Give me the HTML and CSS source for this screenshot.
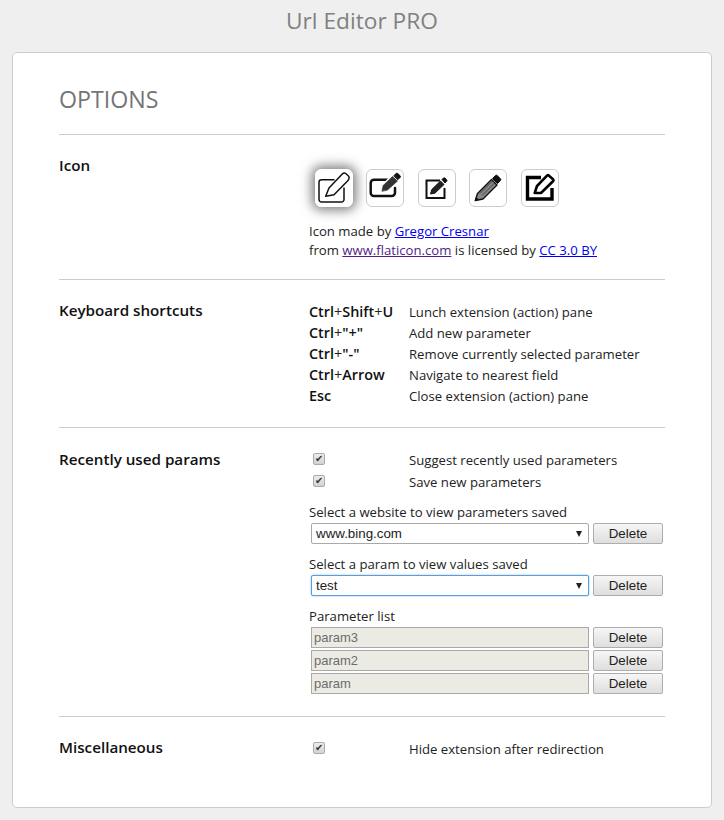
FILE: index.html
```html
<!DOCTYPE html>
<html lang="en">
<head>
    <meta charset="UTF-8">
    <title>Url Editor PRO</title>
    <link rel="stylesheet" href="styles.css">
</head>
<body>
    <h1 class="app-title">Url Editor PRO</h1>
    <div class="card">
        <h2 class="card-title">OPTIONS</h2>

        <section class="row row-icon">
            <h3 class="row-label">Icon</h3>
            <div class="row-body">
                <div class="icons">
                    <button class="icon-btn selected" type="button">
                        <svg width="34" height="34" viewBox="0 0 34 34" fill="none" stroke="#111" stroke-width="1.5" stroke-linejoin="round" stroke-linecap="round">
                            <path d="M17 8.700H4.500a2.500 2.500 0 0 0-2.500 2.500V28.500a2.500 2.500 0 0 0 2.500 2.500H24.500a2.500 2.500 0 0 0 2.500-2.500V17"/>
                            <path d="M8.700 25.300L12 17 25.300 3c1-1 2.400-1.300 3.400-.5L31.500 5c1 1 .8 3.500-1.200 5.300L17 23.700z"/>
                        </svg>
                    </button>
                    <button class="icon-btn" type="button">
                        <svg width="34" height="34" viewBox="0 0 34 34" fill="none" stroke="#111" stroke-width="2.500" stroke-linejoin="round" stroke-linecap="round">
                            <path d="M20 8.700H6a3.300 3.300 0 0 0-3.300 3.300v9.700A3.300 3.300 0 0 0 6 25h17.700a3.300 3.300 0 0 0 3.300-3.300V17"/>
                            <path d="M13.500 20.500l1-6.500L24 4.500l6 5.500-10 10z" fill="#fff" stroke="#fff" stroke-width="1.500"/>
                            <path d="M14 20l1.200-5.500L24.500 5.500l5 4.500L19.500 19z" fill="#333" stroke="#222" stroke-width=".6"/>
                            <path d="M26 4.500l2.200-2c.5-.4 1-.4 1.500 0l2.500 2.300c.4.500.4 1 0 1.500L30 8.500z" fill="#111" stroke-width="1"/>
                        </svg>
                    </button>
                    <button class="icon-btn" type="button">
                        <svg width="34" height="34" viewBox="0 0 34 34" fill="none" stroke="#111" stroke-width="2" stroke-linejoin="miter">
                            <path d="M20 9.500H6.500V27h18V17"/>
                            <path d="M10.500 23l1.300-4.500L20.500 10l3.500 3.500-9 8.600z" fill="#222" stroke-width="1" stroke-linejoin="round"/>
                            <path d="M22 8.500l1.500-1.500c.5-.4 1-.4 1.400 0l1.800 1.800c.4.400.4.900 0 1.300L25 12z" fill="#111" stroke-width="1" stroke-linejoin="round"/>
                        </svg>
                    </button>
                    <button class="icon-btn" type="button">
                        <svg width="34" height="34" viewBox="0 0 34 34" fill="none" stroke="#111" stroke-linejoin="round">
                            <path d="M4.300 29.500l2.200-7L20.500 8.500l5.500 5.500-14 14z" fill="#888" stroke-width="1.400"/>
                            <path d="M9 22.500L22 9.500M11 24.500L24 11.500" stroke="#333" stroke-width=".8"/>
                            <path d="M21.500 7.500l3-3c.5-.5 1.200-.5 1.700 0l3.300 3.300c.5.500.5 1.200 0 1.700l-3 3z" fill="#111" stroke-width="1"/>
                            <path d="M4.300 29.500l.9-3 2.200 2.200z" fill="#111" stroke-width="1"/>
                        </svg>
                    </button>
                    <button class="icon-btn" type="button">
                        <svg width="34" height="34" viewBox="0 0 34 34" fill="none" stroke="#000" stroke-linejoin="miter">
                            <path d="M18 6.500H4.500v21.500h24.500V17" stroke-width="3.400"/>
                            <path d="M11.700 22L14 15 24 4.700c.6-.6 1.400-.6 2 0l4 3.500c.7.600.7 1.400 0 2L18 22z" stroke-width="2.600" stroke-linejoin="round"/>
                        </svg>
                    </button>
                </div>
                <p class="credit">Icon made by <a href="#a">Gregor Cresnar</a><br>from <a class="visited" href="#b">www.flaticon.com</a> is licensed by <a href="#c">CC 3.0 BY</a></p>
            </div>
        </section>

        <section class="row row-keys">
            <h3 class="row-label">Keyboard shortcuts</h3>
            <div class="row-body shortcuts">
                <div class="shortcut"><span class="keys"><b>Ctrl</b>+<b>Shift</b>+<b>U</b></span><span>Lunch extension (action) pane</span></div>
                <div class="shortcut"><span class="keys"><b>Ctrl</b>+<b>"+"</b></span><span>Add new parameter</span></div>
                <div class="shortcut"><span class="keys"><b>Ctrl</b>+<b>"-"</b></span><span>Remove currently selected parameter</span></div>
                <div class="shortcut"><span class="keys"><b>Ctrl</b>+<b>Arrow</b></span><span>Navigate to nearest field</span></div>
                <div class="shortcut"><span class="keys"><b>Esc</b></span><span>Close extension (action) pane</span></div>
            </div>
        </section>

        <section class="row row-params">
            <h3 class="row-label">Recently used params</h3>
            <div class="row-body">
                <label class="check"><span class="check-box"><input type="checkbox" checked></span><span>Suggest recently used parameters</span></label>
                <label class="check"><span class="check-box"><input type="checkbox" checked></span><span>Save new parameters</span></label>

                <div class="field field-first">
                    <div class="field-label">Select a website to view parameters saved</div>
                    <div class="control">
                        <div class="select-wrap"><select class="select"><option>www.bing.com</option></select></div>
                        <button class="delete" type="button">Delete</button>
                    </div>
                </div>

                <div class="field">
                    <div class="field-label">Select a param to view values saved</div>
                    <div class="control">
                        <div class="select-wrap"><select class="select focused"><option>test</option></select></div>
                        <button class="delete" type="button">Delete</button>
                    </div>
                </div>

                <div class="field">
                    <div class="field-label">Parameter list</div>
                    <div class="control tight"><input class="param" type="text" value="param3" disabled><button class="delete" type="button">Delete</button></div>
                    <div class="control tight"><input class="param" type="text" value="param2" disabled><button class="delete" type="button">Delete</button></div>
                    <div class="control tight"><input class="param" type="text" value="param" disabled><button class="delete" type="button">Delete</button></div>
                </div>
            </div>
        </section>

        <section class="row row-misc">
            <h3 class="row-label">Miscellaneous</h3>
            <div class="row-body">
                <label class="check"><span class="check-box"><input type="checkbox" checked></span><span>Hide extension after redirection</span></label>
            </div>
        </section>
    </div>
</body>
</html>
```

FILE: styles.css
```css
body {
    margin: 0;
    background-color: #efefef;
    font-family: "Open Sans", sans-serif;
    font-size: 13.15px;
    color: #222;
}

.app-title {
    margin: 0;
    height: 52px;
    line-height: 41px;
    text-align: center;
    font-size: 22.7px;
    font-weight: 400;
    color: #808080;
}

.card {
    margin: 0 12px;
    padding: 28px 46px 30px;
    height: 756px;
    box-sizing: border-box;
    background-color: #fff;
    border: 1px solid #ccc;
    border-radius: 5px;
}

.card-title {
    margin: 0;
    height: 53px;
    line-height: 36px;
    font-size: 23.2px;
    font-weight: 400;
    color: #757575;
}

.row {
    display: flex;
    border-top: 1px solid #ccc;
}

.row-label {
    width: 250px;
    flex-shrink: 0;
    margin: 0;
    font-size: 15.2px;
    line-height: 20px;
    font-weight: 600;
    color: #111;
}

.row-body {
    flex: 1;
    min-width: 0;
}

.row-icon { height: 145px; padding-top: 22px; box-sizing: border-box; }
.row-keys { height: 148px; padding-top: 22px; box-sizing: border-box; }
.row-params { height: 289px; padding-top: 21px; box-sizing: border-box; }
.row-misc { padding-top: 21px; }

.row-icon .row-label,
.row-keys .row-label {
    margin-top: -2px;
}

.row-misc .row-label {
    margin-top: -1px;
}

.icons {
    display: flex;
    gap: 13.5px;
    padding: 12px 0 0 5.9px;
}

.icon-btn {
    width: 38px;
    height: 38px;
    padding: 1px;
    display: flex;
    align-items: center;
    justify-content: center;
    box-sizing: border-box;
    background-color: #fff;
    border: 1px solid #ccc;
    border-radius: 6px;
}

.icon-btn svg {
    display: block;
}

.icon-btn.selected {
    border-color: #fff;
    box-shadow: 0 0 12px 3px #7a7a7a;
}

.credit {
    margin: 15px 0 0;
    line-height: 19px;
}

.credit a {
    color: #0000ee;
}

.credit a.visited {
    color: #551a8b;
}

.shortcut {
    display: flex;
    line-height: 21px;
}

.keys {
    width: 100px;
    flex-shrink: 0;
    margin-top: -1px;
    font-size: 14.4px;
}

.keys b {
    font-weight: 600;
    color: #111;
}

.check {
    display: flex;
    align-items: center;
    height: 22px;
}

.check-box {
    width: 100px;
    flex-shrink: 0;
    display: flex;
    padding-left: 4px;
    box-sizing: border-box;
}

.check input {
    appearance: none;
    position: relative;
    width: 12px;
    height: 12px;
    margin: 0 0 2px;
    background: linear-gradient(#ededed, #d2d2d2);
    border: 1px solid #aaa;
    border-radius: 2px;
}

.check input:checked::after {
    content: "✔";
    position: absolute;
    left: 1px;
    top: -3px;
    font-family: "DejaVu Sans", sans-serif;
    font-size: 10px;
    line-height: 16px;
    color: #333;
}

.field-first {
    margin-top: 10px;
}

.field {
    margin-bottom: 11px;
}

.field-label {
    line-height: 18px;
}

.control {
    display: flex;
    gap: 4px;
    margin: 2px 2px 0;
}

.control.tight {
    margin-bottom: 2px;
}

.control.tight + .control.tight {
    margin-top: 0;
}

.select-wrap {
    position: relative;
    flex: 1;
    min-width: 0;
}

.select-wrap::after {
    content: "";
    position: absolute;
    right: 7px;
    top: 8px;
    border-left: 3px solid transparent;
    border-right: 3px solid transparent;
    border-top: 6px solid #222;
    pointer-events: none;
}

.select {
    appearance: none;
    display: block;
    width: 100%;
    height: 21px;
    padding: 0 4px;
    background-color: #fff;
    border: 1px solid #a9a9a9;
    border-radius: 2px;
    font-family: "Liberation Sans", Arial, sans-serif;
    font-size: 13.33px;
    color: #222;
    outline: none;
}

.select.focused {
    border-color: #5b9dd9;
    box-shadow: 0 0 2px #7eb4ea;
}

.delete {
    width: 70px;
    height: 21px;
    padding: 0;
    flex-shrink: 0;
    background: linear-gradient(#f6f6f6, #dedede);
    border: 1px solid #adadad;
    border-radius: 2px;
    font-family: "Liberation Sans", Arial, sans-serif;
    font-size: 13.33px;
    color: #222;
}

.param {
    flex: 1;
    min-width: 0;
    height: 21px;
    padding: 0 1px 0 2px;
    box-sizing: border-box;
    background-color: #ebebe4;
    border: 1px solid #a9a9a9;
    font-family: "Liberation Sans", Arial, sans-serif;
    font-size: 13px;
    color: #6d6d6d;
}
```
